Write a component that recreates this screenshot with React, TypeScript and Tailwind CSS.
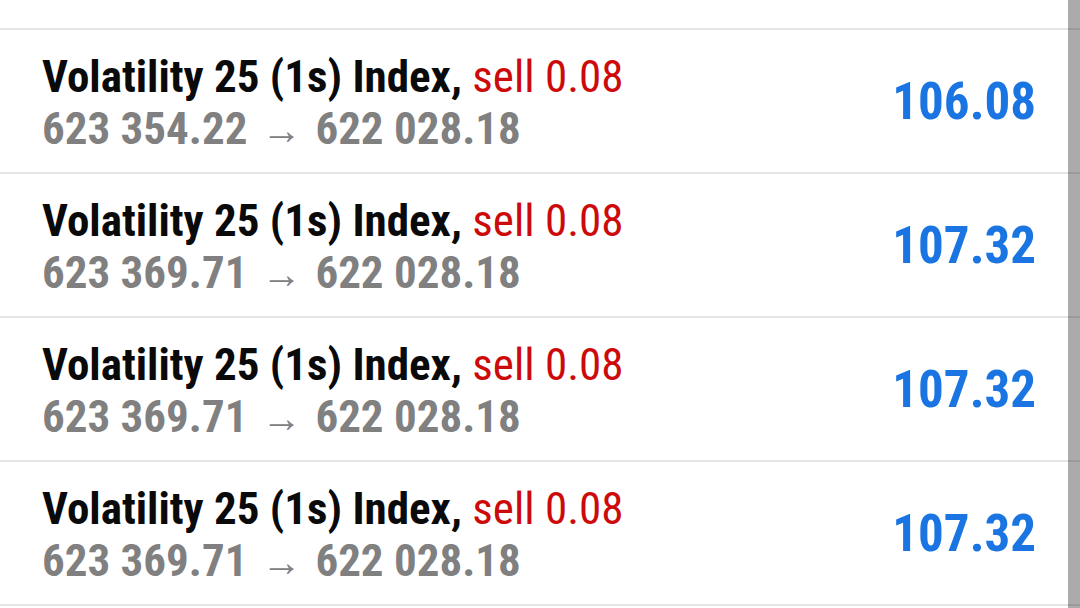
import React from 'react';

interface Deal {
  symbol: string;
  side: string;
  volume: string;
  open: string;
  close: string;
  profit: string;
}

const deals: Deal[] = [
  { symbol: 'Volatility 25 (1s) Index,', side: 'sell', volume: '0.08', open: '623 414.73', close: '621 954.80', profit: '116.79' },
  { symbol: 'Volatility 25 (1s) Index,', side: 'sell', volume: '0.08', open: '623 354.22', close: '622 028.18', profit: '106.08' },
  { symbol: 'Volatility 25 (1s) Index,', side: 'sell', volume: '0.08', open: '623 369.71', close: '622 028.18', profit: '107.32' },
  { symbol: 'Volatility 25 (1s) Index,', side: 'sell', volume: '0.08', open: '623 369.71', close: '622 028.18', profit: '107.32' },
  { symbol: 'Volatility 25 (1s) Index,', side: 'sell', volume: '0.08', open: '623 369.71', close: '622 028.18', profit: '107.32' },
];

function DealRow({ deal }: { deal: Deal }) {
  return (
    <div className="flex h-[144px] items-center justify-between border-b-2 border-[#e6e6e6] pl-[42px] pr-[44px]">
      <div className="flex flex-col pt-[7px]">
        <div className="text-[45px] leading-[50px] font-bold text-[#0a0a0a] whitespace-nowrap">
          {deal.symbol} <span className="font-normal text-[#cc0a0a]">{deal.side} {deal.volume}</span>
        </div>
        <div className="text-[45px] leading-[54px] font-bold text-[#808080] whitespace-nowrap">
          {deal.open}
          <span className="mx-[14px] font-normal text-[40px]">→</span>
          {deal.close}
        </div>
      </div>
      <div className="text-[51px] leading-none font-bold text-[#1a75e2]">{deal.profit}</div>
    </div>
  );
}

export default function App() {
  return (
    <div
      className="relative h-[608px] w-[1080px] overflow-hidden bg-white"
      style={{ fontFamily: '"Roboto Condensed", Roboto, sans-serif' }}
    >
      {/* list scrolled so the first deal is cut off */}
      <div className="-mt-[114px]">
        {deals.map((d, i) => (
          <DealRow key={i} deal={d} />
        ))}
      </div>

      {/* scrollbar overlay */}
      <div className="absolute right-0 top-0 h-full w-[12px] bg-black/[0.33]" />
    </div>
  );
}
